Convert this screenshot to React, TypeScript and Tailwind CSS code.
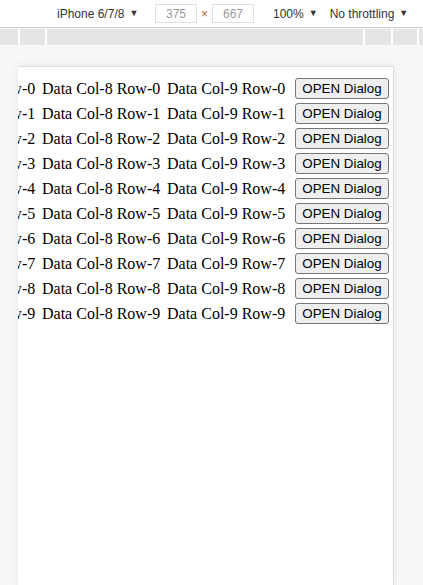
const rows = Array.from({ length: 10 }, (_, i) => i)

const Caret = () => <span className="ml-[5px] text-[9px] text-[#333]">▼</span>

const Toolbar = () => {
  return (
    <div className="h-[28px] bg-white border-b border-[#cfcfcf] flex items-center pl-[57px] whitespace-nowrap text-[12px] text-[#333] font-['Liberation_Sans',sans-serif]">
      <div className="flex items-center w-[80px]">
        iPhone 6/7/8<Caret />
      </div>
      <div className="ml-[18px] w-[42px] h-[19px] border border-[#e0e0e0] flex items-center justify-center text-[#9a9a9a]">375</div>
      <div className="w-[15px] text-center text-[12px] text-[#c5632f]">×</div>
      <div className="w-[42px] h-[19px] border border-[#e0e0e0] flex items-center justify-center text-[#9a9a9a]">667</div>
      <div className="ml-[19px] flex items-center">
        100%<Caret />
      </div>
      <div className="ml-[12px] flex items-center">
        No throttling<Caret />
      </div>
    </div>
  )
}

const Ruler = () => {
  return (
    <div className="mt-[1px] h-[16px] flex gap-[2px] bg-white">
      <div className="w-[18px] bg-[#e5e5e5]" />
      <div className="w-[25px] bg-[#e5e5e5]" />
      <div className="w-[316px] bg-[#e5e5e5]" />
      <div className="w-[26px] bg-[#e5e5e5]" />
      <div className="w-[24px] bg-[#e5e5e5]" />
      <div className="flex-1 bg-[#e5e5e5]" />
    </div>
  )
}

export default function App() {
  return (
    <div className="w-[423px] h-[585px] overflow-hidden bg-[#f7f7f7] flex flex-col">
      <Toolbar />
      <Ruler />
      <div className="flex-1 pt-[21px] pl-[18px]">
        <div className="w-[376px] h-full bg-white border-t border-r border-[#dcdcdc] shadow-[0_0_8px_rgba(0,0,0,0.08)] overflow-hidden">
          <div className="pt-[10px] flex flex-col gap-[2px] font-['Liberation_Serif',serif] text-[16px] text-black">
            {rows.map((i) => (
              <div key={i} className="h-[23px] flex items-center justify-end pr-[4px] whitespace-nowrap">
                <div className="shrink-0 w-[125px]">Data Col-7 Row-{i}</div>
                <div className="shrink-0 w-[125px]">Data Col-8 Row-{i}</div>
                <div className="shrink-0 w-[128px]">Data Col-9 Row-{i}</div>
                <button className="shrink-0 w-[94px] h-[21px] border border-[#767676] rounded-[3px] bg-[#efefef] font-['Liberation_Sans',sans-serif] text-[13.33px] leading-none">
                  OPEN Dialog
                </button>
              </div>
            ))}
          </div>
        </div>
      </div>
    </div>
  )
}
